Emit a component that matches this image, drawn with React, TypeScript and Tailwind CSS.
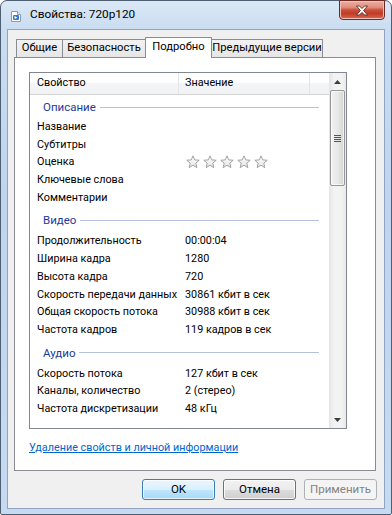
import React from "react";

const FONT = { fontFamily: 'Roboto, "Liberation Sans", Arial, sans-serif' };

function Star() {
  return (
    <svg width="14" height="14" viewBox="0 0 14 14" className="block">
      <defs>
        <linearGradient id="sg" x1="0" y1="0" x2="0" y2="1">
          <stop offset="0" stopColor="#ffffff" />
          <stop offset="1" stopColor="#e4e4e4" />
        </linearGradient>
      </defs>
      <path
        d="M7 0.8 L8.75 4.9 L13.2 5.25 L9.8 8.15 L10.85 12.6 L7 10.25 L3.15 12.6 L4.2 8.15 L0.8 5.25 L5.25 4.9 Z"
        fill="url(#sg)"
        stroke="#a3a3a3"
        strokeWidth="1"
        strokeLinejoin="round"
      />
    </svg>
  );
}

function GroupHeader({ label, first }: { label: string; first?: boolean }) {
  return (
    <div className={first ? "h-[23px] pt-[3px]" : "h-[26px] pt-[5px]"}>
      <div className="flex items-center h-[18px] pl-[13px] pr-[10px] gap-[4px]">
        <span className="text-[#1e3a98] text-[11.5px] leading-[18px] whitespace-nowrap">{label}</span>
        <div className="flex-1 h-px bg-[#b4c0dc]" />
      </div>
    </div>
  );
}

function Row({ name, value, stars }: { name: string; value?: string; stars?: boolean }) {
  return (
    <div className="h-[17.7px] flex items-center leading-[17.7px] whitespace-nowrap">
      <div className="w-[155px] pl-[7px] shrink-0 overflow-hidden">{name}</div>
      {stars ? (
        <div className="flex gap-[3px] pl-[1px]">
          <Star />
          <Star />
          <Star />
          <Star />
          <Star />
        </div>
      ) : (
        <div>{value}</div>
      )}
    </div>
  );
}

function Button({ label, variant }: { label: string; variant: "default" | "normal" | "disabled" }) {
  const cls =
    variant === "default"
      ? "border-[#3c7fb1] bg-[linear-gradient(#eaf6fd_0%,#d9f0fc_50%,#bee6fd_51%,#a7d9f5_100%)] text-black shadow-[inset_0_0_0_1px_#ffffffaa]"
      : variant === "normal"
      ? "border-[#707070] bg-[linear-gradient(#f2f2f2_0%,#ebebeb_50%,#dddddd_51%,#cfcfcf_100%)] text-black shadow-[inset_0_0_0_1px_#ffffffcc]"
      : "border-[#adb2b5] bg-[#f4f4f4] text-[#838383]";
  return (
    <div className={`w-[73px] h-[21px] rounded-[3px] border flex items-center justify-center leading-none text-[11.5px] ${cls}`}>
      {label}
    </div>
  );
}

export default function App() {
  return (
    <div className="w-[392px] h-[515px] bg-white text-[10.8px] text-black" style={FONT}>
      <div className="w-[392px] h-[515px] rounded-t-[7px] rounded-b-[2px] border border-[#4f5f73] bg-[linear-gradient(180deg,#dbe8f6_0px,#c9dcf1_30px,#bfd5ee_200px,#c6dbf1_515px)] flex flex-col px-[6px] pb-[6px]">
        {/* Title bar */}
        <div className="h-[28px] flex items-start shrink-0">
          <div className="flex items-center h-[28px] pl-[4px] gap-[9px]">
            <svg width="10" height="11" viewBox="0 0 10 11" className="block mt-[2px]">
              <path d="M0.5 0.5 H6.5 L9.5 3.5 V10.5 H0.5 Z" fill="#ffffff" stroke="#8c9cb0" />
              <path d="M6.5 0.5 V3.5 H9.5" fill="#e6ecf3" stroke="#8c9cb0" />
              <rect x="2" y="4" width="6" height="5" rx="1" fill="#3a78c8" />
              <path d="M3.5 5 L6.5 6.5 L3.5 8 Z" fill="#ffffff" />
            </svg>
            <span className="text-[11.8px] text-black leading-none">Свойства: 720p120</span>
          </div>
          <div className="ml-auto -mt-px w-[46px] h-[20px] rounded-b-[4px] border border-[#6d2a22] bg-[linear-gradient(180deg,#eab0a4_0%,#e08f7e_35%,#cc4f3a_50%,#c13c28_70%,#d66a52_100%)] flex items-center justify-center shadow-[inset_0_0_0_1px_#f2c0b4]">
            <svg width="14" height="11" viewBox="0 0 14 11">
              <path
                d="M1.5 1 H4.5 L7 3.6 L9.5 1 H12.5 L8.6 5.5 L12.5 10 H9.5 L7 7.4 L4.5 10 H1.5 L5.4 5.5 Z"
                fill="#ffffff"
                stroke="#5a2a24"
                strokeWidth="0.9"
                strokeLinejoin="round"
              />
            </svg>
          </div>
        </div>
        {/* Client */}
        <div className="flex-1 border border-[#8ea4c0] bg-[#f0f0f0] flex flex-col px-[6px] pb-[8px]">
          {/* Tabs */}
          <div className="h-[27px] flex items-end pl-[2px] pt-[7px] whitespace-nowrap text-[11.2px]">
            <div className="w-[47px] h-[18px] border border-b-0 border-[#898c95] bg-[linear-gradient(#f2f2f2,#e6e6e6)] flex items-center justify-center rounded-t-[1px]">
              Общие
            </div>
            <div className="w-[84px] -ml-px h-[18px] border border-b-0 border-[#898c95] bg-[linear-gradient(#f2f2f2,#e6e6e6)] flex items-center justify-center rounded-t-[1px]">
              Безопасность
            </div>
            <div className="w-[67px] -ml-[1px] h-[21px] -mb-px relative z-10 border border-b-0 border-[#898c95] bg-white flex items-center justify-center pb-[1px] rounded-t-[1px]">
              Подробно
            </div>
            <div className="w-[112px] -ml-px h-[18px] border border-b-0 border-[#898c95] bg-[linear-gradient(#f2f2f2,#e6e6e6)] flex items-center justify-center rounded-t-[1px]">
              Предыдущие версии
            </div>
          </div>
          {/* Panel */}
          <div className="w-[362px] h-[414px] border border-[#898c95] bg-white flex flex-col pt-[14px] pl-[14px]">
            <div className="w-[318px] h-[357px] border border-[#828790] flex">
              <div className="flex-1 flex flex-col overflow-hidden">
                {/* Column header */}
                <div className="h-[22px] shrink-0 flex border-b border-[#d5d5d5] bg-[linear-gradient(#ffffff_0%,#ffffff_45%,#f4f5f7_46%,#f1f2f4_100%)]">
                  <div className="w-[149px] border-r border-[#e3e4e6] pl-[7px] flex items-center">Свойство</div>
                  <div className="w-[131px] border-r border-[#e3e4e6] pl-[6px] flex items-center">Значение</div>
                  <div className="flex-1" />
                </div>
                <div className="flex-1 overflow-hidden">
                  <GroupHeader label="Описание" first />
                  <Row name="Название" />
                  <Row name="Субтитры" />
                  <Row name="Оценка" stars />
                  <Row name="Ключевые слова" />
                  <Row name="Комментарии" />
                  <GroupHeader label="Видео" />
                  <Row name="Продолжительность" value="00:00:04" />
                  <Row name="Ширина кадра" value="1280" />
                  <Row name="Высота кадра" value="720" />
                  <Row name="Скорость передачи данных" value="30861 кбит в сек" />
                  <Row name="Общая скорость потока" value="30988 кбит в сек" />
                  <Row name="Частота кадров" value="119 кадров в сек" />
                  <GroupHeader label="Аудио" />
                  <Row name="Скорость потока" value="127 кбит в сек" />
                  <Row name="Каналы, количество" value="2 (стерео)" />
                  <Row name="Частота дискретизации" value="48 кГц" />
                  <GroupHeader label="Носитель" />
                </div>
              </div>
              {/* Scrollbar */}
              <div className="w-[17px] flex flex-col bg-[linear-gradient(90deg,#e5e5e5,#f3f3f3_30%,#f3f3f3_70%,#e9e9e9)]">
                <div className="h-[17px] flex items-center justify-center">
                  <svg width="7" height="4" viewBox="0 0 7 4">
                    <path d="M0 4 L3.5 0 L7 4 Z" fill="#3d3d3d" />
                  </svg>
                </div>
                <div className="mx-[1px] h-[96px] rounded-[2px] border border-[#979797] bg-[linear-gradient(90deg,#f2f2f2,#e8e8e8_50%,#d5d5d5)] flex flex-col items-center justify-center gap-[1px] shadow-[inset_0_0_0_1px_#ffffffaa]">
                  <div className="w-[7px] h-px bg-[#555]" />
                  <div className="w-[7px] h-px bg-[#555]" />
                  <div className="w-[7px] h-px bg-[#555]" />
                  <div className="w-[7px] h-px bg-[#555]" />
                </div>
                <div className="flex-1" />
                <div className="h-[17px] flex items-center justify-center">
                  <svg width="7" height="4" viewBox="0 0 7 4">
                    <path d="M0 0 L3.5 4 L7 0 Z" fill="#3d3d3d" />
                  </svg>
                </div>
              </div>
            </div>
            <div className="mt-[11px] h-[16px] flex items-center">
              <span className="text-[#0066cc] underline leading-[16px]">Удаление свойств и личной информации</span>
            </div>
          </div>
          {/* Buttons */}
          <div className="mt-[8px] flex justify-end gap-[8px] pr-[1px]">
            <Button label="OK" variant="default" />
            <Button label="Отмена" variant="normal" />
            <Button label="Применить" variant="disabled" />
          </div>
        </div>
      </div>
    </div>
  );
}
